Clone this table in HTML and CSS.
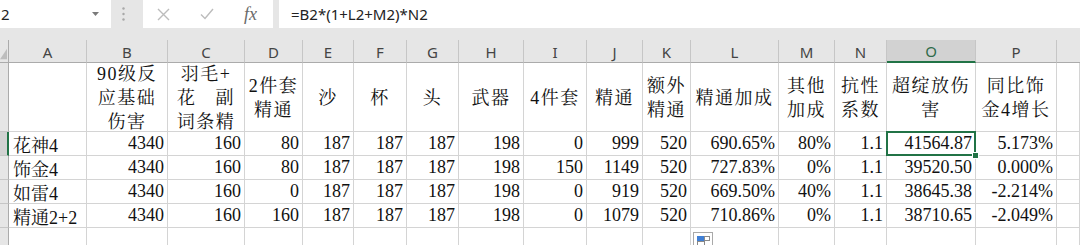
FILE: index.html
```html
<!DOCTYPE html>
<html lang="zh-CN">
<head>
<meta charset="utf-8">
<title>Sheet</title>
<link rel="stylesheet" href="styles.css">
</head>
<body>
<div class="fbar">
  <div class="namebox">
    <span class="nb-text">2</span>
    <svg class="nb-arrow" width="7" height="4" viewBox="0 0 7 4"><polygon points="0,0 7,0 3.5,4" fill="#7a7a7a"/></svg>
  </div>
  <div class="grip">
    <svg width="3" height="14" viewBox="0 0 3 14"><circle cx="1.5" cy="1.5" r="1.2" fill="#a8a8a8"/><circle cx="1.5" cy="7" r="1.2" fill="#a8a8a8"/><circle cx="1.5" cy="12.5" r="1.2" fill="#a8a8a8"/></svg>
  </div>
  <div class="tools">
    <svg class="ic" width="13" height="13" viewBox="0 0 13 13"><path d="M1 1 L12 12 M12 1 L1 12" stroke="#bcbcbc" stroke-width="1.4" fill="none"/></svg>
    <svg class="ic" width="14" height="12" viewBox="0 0 14 12"><path d="M1 6.5 L5 10.5 L13 1" stroke="#bcbcbc" stroke-width="1.4" fill="none"/></svg>
    <span class="fx">fx</span>
  </div>
  <div class="formula">=B2*(1+L2+M2)*N2</div>
</div>

<div class="sheet">
  <div class="corner"><svg width="8" height="12" viewBox="0 0 8 12"><polygon points="8,0 8,12 0,12" fill="#bdbdbd"/></svg></div>
  <div class="ch">A</div><div class="ch">B</div><div class="ch">C</div><div class="ch">D</div><div class="ch">E</div><div class="ch">F</div><div class="ch">G</div><div class="ch">H</div><div class="ch">I</div><div class="ch">J</div><div class="ch">K</div><div class="ch">L</div><div class="ch">M</div><div class="ch">N</div><div class="ch sel">O</div><div class="ch">P</div><div class="ch last"></div>

  <div class="rh"></div>
  <div class="c h"></div>
  <div class="c h">90级反<br>应基础<br>伤害</div>
  <div class="c h"><span class="lines">羽毛+<span class="dist"><span>花</span><span>副</span></span>词条精</span></div>
  <div class="c h">2件套<br>精通</div>
  <div class="c h">沙</div>
  <div class="c h">杯</div>
  <div class="c h">头</div>
  <div class="c h">武器</div>
  <div class="c h">4件套</div>
  <div class="c h">精通</div>
  <div class="c h">额外<br>精通</div>
  <div class="c h">精通加成</div>
  <div class="c h">其他<br>加成</div>
  <div class="c h">抗性<br>系数</div>
  <div class="c h">超绽放伤<br>害</div>
  <div class="c h">同比饰<br>金4增长</div>
  <div class="c"></div>

  <div class="rh sel"></div>
  <div class="c t">花神4</div>
  <div class="c">4340</div><div class="c">160</div><div class="c">80</div><div class="c">187</div><div class="c">187</div><div class="c">187</div><div class="c">198</div><div class="c">0</div><div class="c">999</div><div class="c">520</div><div class="c">690.65%</div><div class="c">80%</div><div class="c">1.1</div><div class="c active">41564.87</div><div class="c">5.173%</div><div class="c"></div>

  <div class="rh"></div>
  <div class="c t">饰金4</div>
  <div class="c">4340</div><div class="c">160</div><div class="c">80</div><div class="c">187</div><div class="c">187</div><div class="c">187</div><div class="c">198</div><div class="c">150</div><div class="c">1149</div><div class="c">520</div><div class="c">727.83%</div><div class="c">0%</div><div class="c">1.1</div><div class="c">39520.50</div><div class="c">0.000%</div><div class="c"></div>

  <div class="rh"></div>
  <div class="c t">如雷4</div>
  <div class="c">4340</div><div class="c">160</div><div class="c">0</div><div class="c">187</div><div class="c">187</div><div class="c">187</div><div class="c">198</div><div class="c">0</div><div class="c">919</div><div class="c">520</div><div class="c">669.50%</div><div class="c">40%</div><div class="c">1.1</div><div class="c">38645.38</div><div class="c">-2.214%</div><div class="c"></div>

  <div class="rh"></div>
  <div class="c t">精通2+2</div>
  <div class="c">4340</div><div class="c">160</div><div class="c">160</div><div class="c">187</div><div class="c">187</div><div class="c">187</div><div class="c">198</div><div class="c">0</div><div class="c">1079</div><div class="c">520</div><div class="c">710.86%</div><div class="c">0%</div><div class="c">1.1</div><div class="c">38710.65</div><div class="c">-2.049%</div><div class="c"></div>

  <div class="rh"></div>
  <div class="c"></div><div class="c"></div><div class="c"></div><div class="c"></div><div class="c"></div><div class="c"></div><div class="c"></div><div class="c"></div><div class="c"></div><div class="c"></div><div class="c"></div><div class="c paste-host"><span class="paste"><i class="p1"></i><i class="p2"></i><i class="p3"></i></span></div><div class="c"></div><div class="c"></div><div class="c"></div><div class="c"></div><div class="c"></div>
</div>
</body>
</html>
```

FILE: styles.css
```css
html, body {
  margin: 0;
  padding: 0;
}
body {
  width: 1080px;
  height: 245px;
  overflow: hidden;
  background: #ffffff;
  font-family: "Liberation Serif", "Noto Serif CJK SC", "Noto Sans CJK SC", serif;
  color: #111;
}

/* formula bar */
.fbar {
  display: flex;
  align-items: flex-start;
  height: 40px;
  background: #e6e6e6;
}
.namebox {
  width: 111px;
  height: 28px;
  box-sizing: border-box;
  background: #fff;
  display: flex;
  align-items: center;
  justify-content: space-between;
  padding: 0 12px 0 1px;
  font: 15px "Noto Sans", sans-serif;
  color: #222;
}
.grip {
  width: 32px;
  height: 28px;
  box-sizing: border-box;
  display: flex;
  align-items: center;
  justify-content: flex-start;
  padding-left: 11px;
}
.tools {
  width: 130px;
  height: 28px;
  background: #fff;
  display: flex;
  align-items: center;
  padding-left: 14px;
  box-sizing: border-box;
  gap: 30px;
}
.fx {
  font: italic 18px "Liberation Serif", serif;
  color: #6a6a6a;
}
.formula {
  flex: 1;
  height: 28px;
  margin-left: 6px;
  background: #fff;
  display: flex;
  align-items: center;
  padding-left: 12px;
  font: 15px "Noto Sans", sans-serif;
  color: #222;
}

/* grid */
.sheet {
  display: grid;
  grid-template-columns: 9px 78px 81px 77px 58px 51px 53px 52px 65px 63px 56px 48px 88px 56px 52px 89px 81px 1fr;
  grid-template-rows: 23px 69px 24px 24px 24px 24px 24px;
}
.corner {
  background: #e6e6e6;
  border-right: 1px solid #ababab;
  border-bottom: 1px solid #ababab;
  display: flex;
  align-items: flex-end;
  justify-content: flex-end;
  padding: 0 1px 2px 0;
}
.ch {
  background: #e6e6e6;
  border-right: 1px solid #c6c6c6;
  border-bottom: 1px solid #ababab;
  display: flex;
  align-items: center;
  justify-content: center;
  font: 15px "Noto Sans", sans-serif;
  color: #444;
  padding-top: 1px;
}
.ch.sel {
  background: #d2d2d2;
  border-bottom: 2px solid #217346;
  color: #2e6b4a;
}
.ch.last { border-right: none; }
.rh {
  background: #e6e6e6;
  border-right: 1px solid #ababab;
  border-bottom: 1px solid #c6c6c6;
}
.rh.sel {
  background: #d2d2d2;
  border-right: 2px solid #217346;
}

.c {
  border-right: 1px solid #d4d4d4;
  border-bottom: 1px solid #d4d4d4;
  display: flex;
  align-items: center;
  justify-content: flex-end;
  padding: 0 3px 0 2px;
  font-size: 18px;
  white-space: nowrap;
  overflow: hidden;
  min-width: 0;
}
.c.t {
  justify-content: flex-start;
  padding-left: 4px;
}
.c.h {
  justify-content: center;
  text-align: center;
  line-height: 24px;
  letter-spacing: 1.5px;
  white-space: normal;
  padding: 2px 0 0 0;
}
.lines {
  display: flex;
  flex-direction: column;
  align-items: center;
}
.dist {
  width: 58px;
  display: flex;
  justify-content: space-between;
}

.active {
  position: relative;
  overflow: visible;
}
.active::after {
  content: "";
  position: absolute;
  top: -1px; left: -1px; right: -1px; bottom: -1px;
  border: 2px solid #217346;
}
.active::before {
  content: "";
  position: absolute;
  right: -4px;
  bottom: -4px;
  width: 5px;
  height: 5px;
  background: #217346;
  border: 1px solid #fff;
  z-index: 2;
}

.paste-host {
  position: relative;
  overflow: visible;
}
.paste {
  position: absolute;
  left: 2px;
  top: 4px;
  width: 20px;
  height: 16px;
  box-sizing: border-box;
  border: 1px solid #a9a9a9;
  background: #fff;
}
.paste i {
  position: absolute;
  display: block;
  box-sizing: border-box;
}
.paste .p1 { left: 3px; top: 3px; width: 8px; height: 5px; background: #3f7fd6; }
.paste .p2 { left: 10px; top: 3px; width: 6px; height: 5px; border: 1px solid #8a8a8a; }
.paste .p3 { left: 3px; top: 8px; width: 8px; height: 5px; border: 1px solid #8a8a8a; }
```
